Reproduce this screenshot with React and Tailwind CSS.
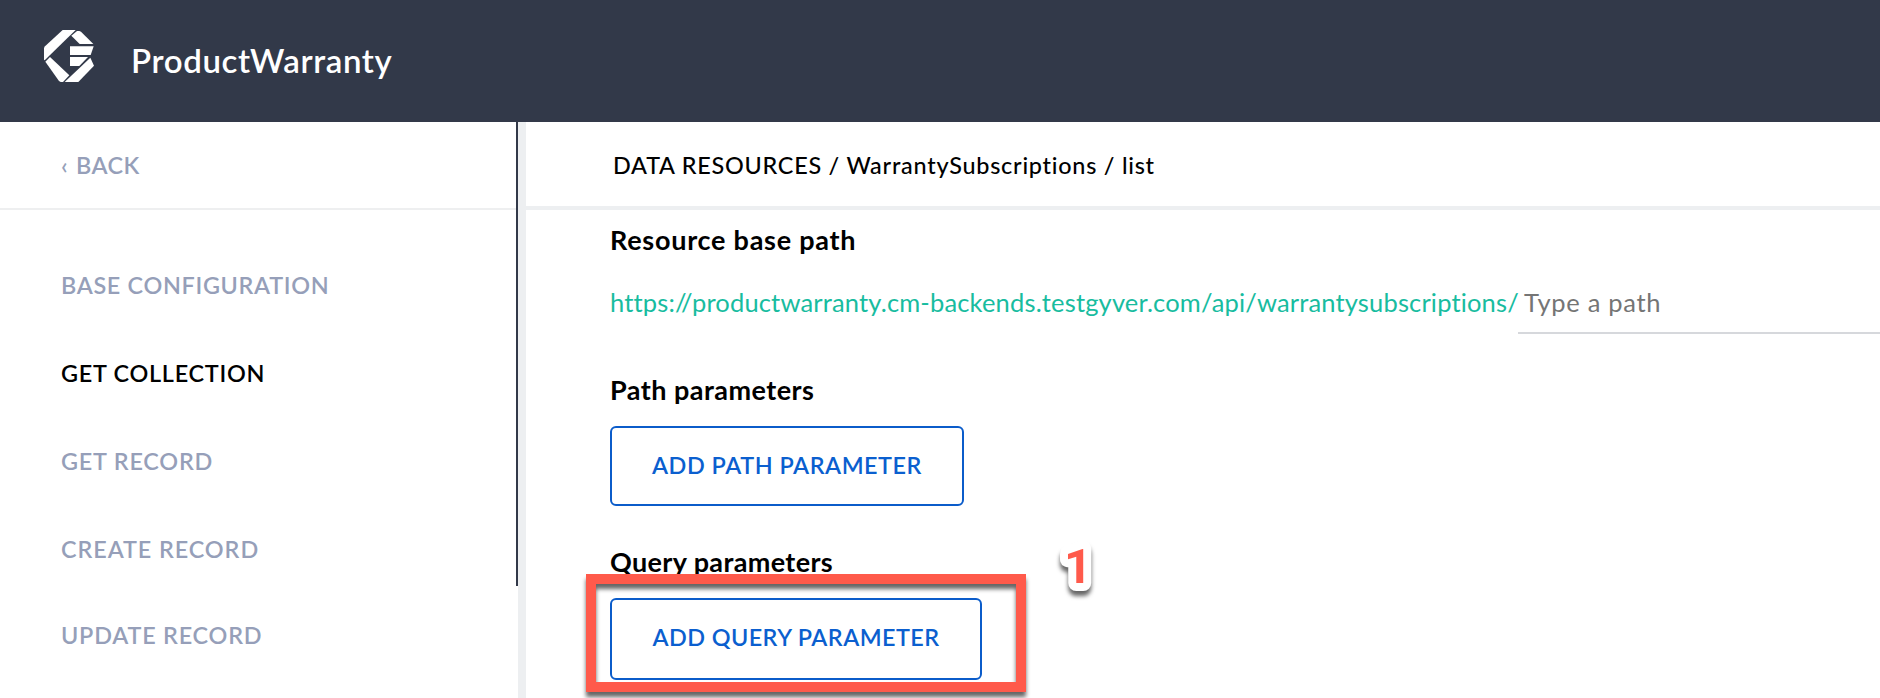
import React from 'react';

const navItems = [
  { label: 'BASE CONFIGURATION', className: 'h-[88px] tracking-[0.68px] text-[#969fb9]' },
  { label: 'GET COLLECTION', className: 'h-[88px] tracking-[0.74px] text-black' },
  { label: 'GET RECORD', className: 'h-[88px] tracking-[0.8px] text-[#969fb9]' },
  { label: 'CREATE RECORD', className: 'h-[88px] tracking-[0.92px] text-[#969fb9]' },
  { label: 'UPDATE RECORD', className: 'h-[84px] tracking-[0.79px] text-[#969fb9]' },
];

function Logo() {
  return (
    <svg viewBox="42 45 150 156" className="h-[52px] w-[50px] shrink-0 fill-white" aria-hidden="true">
      <path d="M98 45H137L44 136L42 134V98L45 94Z" />
      <path d="M46 140L60 126L118 181L99 201H92L87 198Z" />
      <path d="M181 128L192 152L145 201H104Z" />
      <path d="M141 48H148L153 50L190 87H149L124 62Z" />
      <path d="M120 94H191L182 120H120Z" />
      <path d="M120 126H174L148 153H120Z" />
    </svg>
  );
}

function SectionTitle({ className, children }) {
  return (
    <h2 className={`h-10 whitespace-nowrap text-[27px] leading-10 font-bold text-black ${className}`}>{children}</h2>
  );
}

function OutlineButton({ className, children }) {
  return (
    <button
      type="button"
      className={`mt-4 flex items-center justify-center whitespace-nowrap rounded-md border-2 border-[#0b5cca] text-[23.4px] font-semibold text-[#0b5fcf] ${className}`}
    >
      {children}
    </button>
  );
}

export default function App() {
  return (
    <div className="relative flex h-[698px] w-[1880px] flex-col overflow-hidden bg-white font-['Lato',sans-serif]">
      <header className="flex h-[122px] shrink-0 items-start bg-[#323949] pl-11">
        <div className="pt-[30px]">
          <Logo />
        </div>
        <h1 className="ml-[37px] pt-10 text-[33px] leading-10 font-semibold tracking-[0.62px] text-white">
          ProductWarranty
        </h1>
      </header>

      <div className="flex min-h-0 flex-1">
        <aside className="flex w-[518px] shrink-0">
          <div className="w-[516px]">
            <div className="flex h-[88px] items-center border-b-2 border-[#eeeff0] pt-0.5 pl-[61px] text-[23.4px] font-semibold text-[#969fb9]">
              <span className="w-[15px]">‹</span>
              <span className="tracking-[0.45px]">BACK</span>
            </div>
            <nav className="flex flex-col pt-8 pl-[61px] text-[23.4px] font-semibold">
              {navItems.map((item) => (
                <a key={item.label} className={`flex items-center whitespace-nowrap ${item.className}`}>
                  {item.label}
                </a>
              ))}
            </nav>
          </div>
          <div className="h-[464px] w-0.5 bg-[#323949]" />
        </aside>

        <main className="min-w-0 flex-1 border-l-8 border-[#edeff1]">
          <div className="flex h-[88px] items-center border-b-4 border-[#edeff1] pt-1 pl-[87px] text-[23.4px] font-medium tracking-[0.76px] whitespace-nowrap text-black">
            DATA RESOURCES / WarrantySubscriptions / list
          </div>

          <div className="pt-[10px] pl-[84px]">
            <SectionTitle className="tracking-[0.74px]">Resource base path</SectionTitle>
            <div className="mt-[10px] flex h-16 text-[25.5px] leading-[64px]">
              <span className="w-[908px] shrink-0 tracking-[0.16px] whitespace-nowrap text-[#18bc9f]">
                https://productwarranty.cm-backends.testgyver.com/api/warrantysubscriptions/
              </span>
              <span className="flex-1 border-b-2 border-[#d6d8dc] pl-[6px] tracking-[0.68px] text-[#757575]">
                Type a path
              </span>
            </div>

            <SectionTitle className="mt-9 tracking-[0.46px]">Path parameters</SectionTitle>
            <OutlineButton className="h-20 w-[354px] tracking-[0.53px]">ADD PATH PARAMETER</OutlineButton>

            <SectionTitle className="mt-9 tracking-[0.36px]">Query parameters</SectionTitle>
            <OutlineButton className="h-[82px] w-[372px] pb-0.5 tracking-[0.44px]">ADD QUERY PARAMETER</OutlineButton>
          </div>
        </main>
      </div>

      <div className="absolute top-[574px] left-[586px] h-[118px] w-[440px] border-10 border-[#ff5a4b] drop-shadow-[0_5px_2px_rgba(0,0,0,0.6)]" />
      <svg
        viewBox="0 0 60 80"
        className="absolute top-[530px] left-[1045px] h-20 w-[60px] overflow-visible drop-shadow-[0_5px_2px_rgba(0,0,0,0.6)]"
      >
        <text
          x="19"
          y="53"
          className="fill-[#ff5a4b] stroke-white stroke-[16px] font-['Roboto',sans-serif] text-[49px] font-bold [paint-order:stroke] [stroke-linejoin:round]"
        >
          1
        </text>
      </svg>
    </div>
  );
}
